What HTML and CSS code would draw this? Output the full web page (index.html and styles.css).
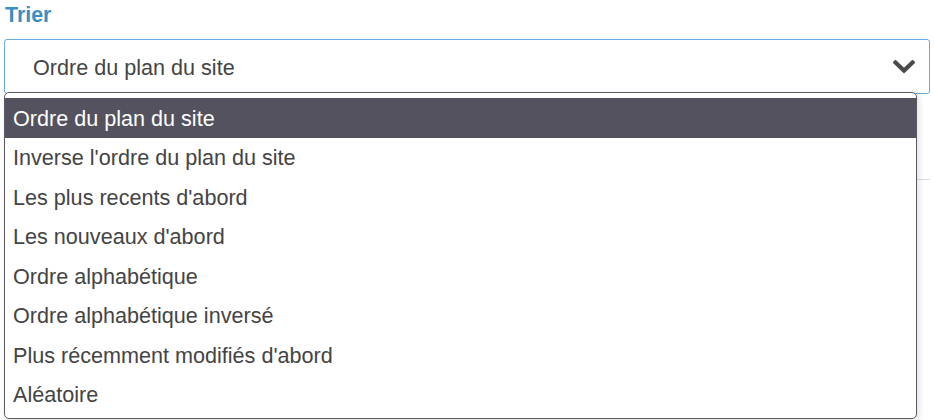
FILE: index.html
```html
<!DOCTYPE html>
<html lang="fr">
<head>
<meta charset="utf-8">
<link rel="stylesheet" href="styles.css">
</head>
<body>
<div class="field">
  <label class="label">Trier</label>
  <div class="select">
    <span class="value">Ordre du plan du site</span>
    <svg class="chevron" width="22" height="14" viewBox="0 0 22 14"><path d="M2.5 2.5 L11 10.5 L19.5 2.5" fill="none" stroke="#4a4a4a" stroke-width="4.2" stroke-linecap="square"/></svg>
  </div>
  <div class="below"></div>
  <ul class="menu">
    <li class="item selected">Ordre du plan du site</li>
    <li class="item">Inverse l'ordre du plan du site</li>
    <li class="item">Les plus recents d'abord</li>
    <li class="item">Les nouveaux d'abord</li>
    <li class="item">Ordre alphabétique</li>
    <li class="item">Ordre alphabétique inversé</li>
    <li class="item">Plus récemment modifiés d'abord</li>
    <li class="item">Aléatoire</li>
  </ul>
</div>
</body>
</html>
```
FILE: styles.css
```css
html, body {
  margin: 0;
  padding: 0;
  background: #fff;
}
body {
  font-family: "Liberation Sans", Arial, sans-serif;
  width: 934px;
  height: 420px;
  overflow: hidden;
}
.field {
  position: relative;
  padding: 3px 4px 0 4px;
}
.label {
  display: block;
  font-weight: bold;
  font-size: 21.4px;
  line-height: 25px;
  color: #3a8ec3;
  padding-left: 1px;
  margin-bottom: 11px;
}
.select {
  box-sizing: border-box;
  height: 55px;
  width: 926px;
  border: 1px solid #6aaae0;
  border-radius: 3px;
  display: flex;
  align-items: center;
  justify-content: space-between;
  padding: 0 14px 0 28px;
}
.value {
  font-size: 21.6px;
  color: #444;
  padding-top: 2px;
}
.chevron {
  display: block;
  margin-top: 1px;
}
.below {
  height: 85px;
  border-bottom: 1px solid #dcdcdc;
  width: 926px;
}
.menu {
  position: absolute;
  left: 4px;
  top: 92px;
  box-sizing: border-box;
  width: 913px;
  height: 327px;
  margin: 0;
  padding: 5px 0 4px 0;
  list-style: none;
  background: #fff;
  border: 1px solid #5a5964;
  border-radius: 5px;
  box-shadow: 2px 2px 6px rgba(0,0,0,0.12);
}
.item {
  box-sizing: border-box;
  height: 39.5px;
  display: flex;
  align-items: center;
  padding: 2px 0 0 8px;
  font-size: 21.6px;
  color: #444;
}
.item.selected {
  background: #53525e;
  color: #fff;
}
```
